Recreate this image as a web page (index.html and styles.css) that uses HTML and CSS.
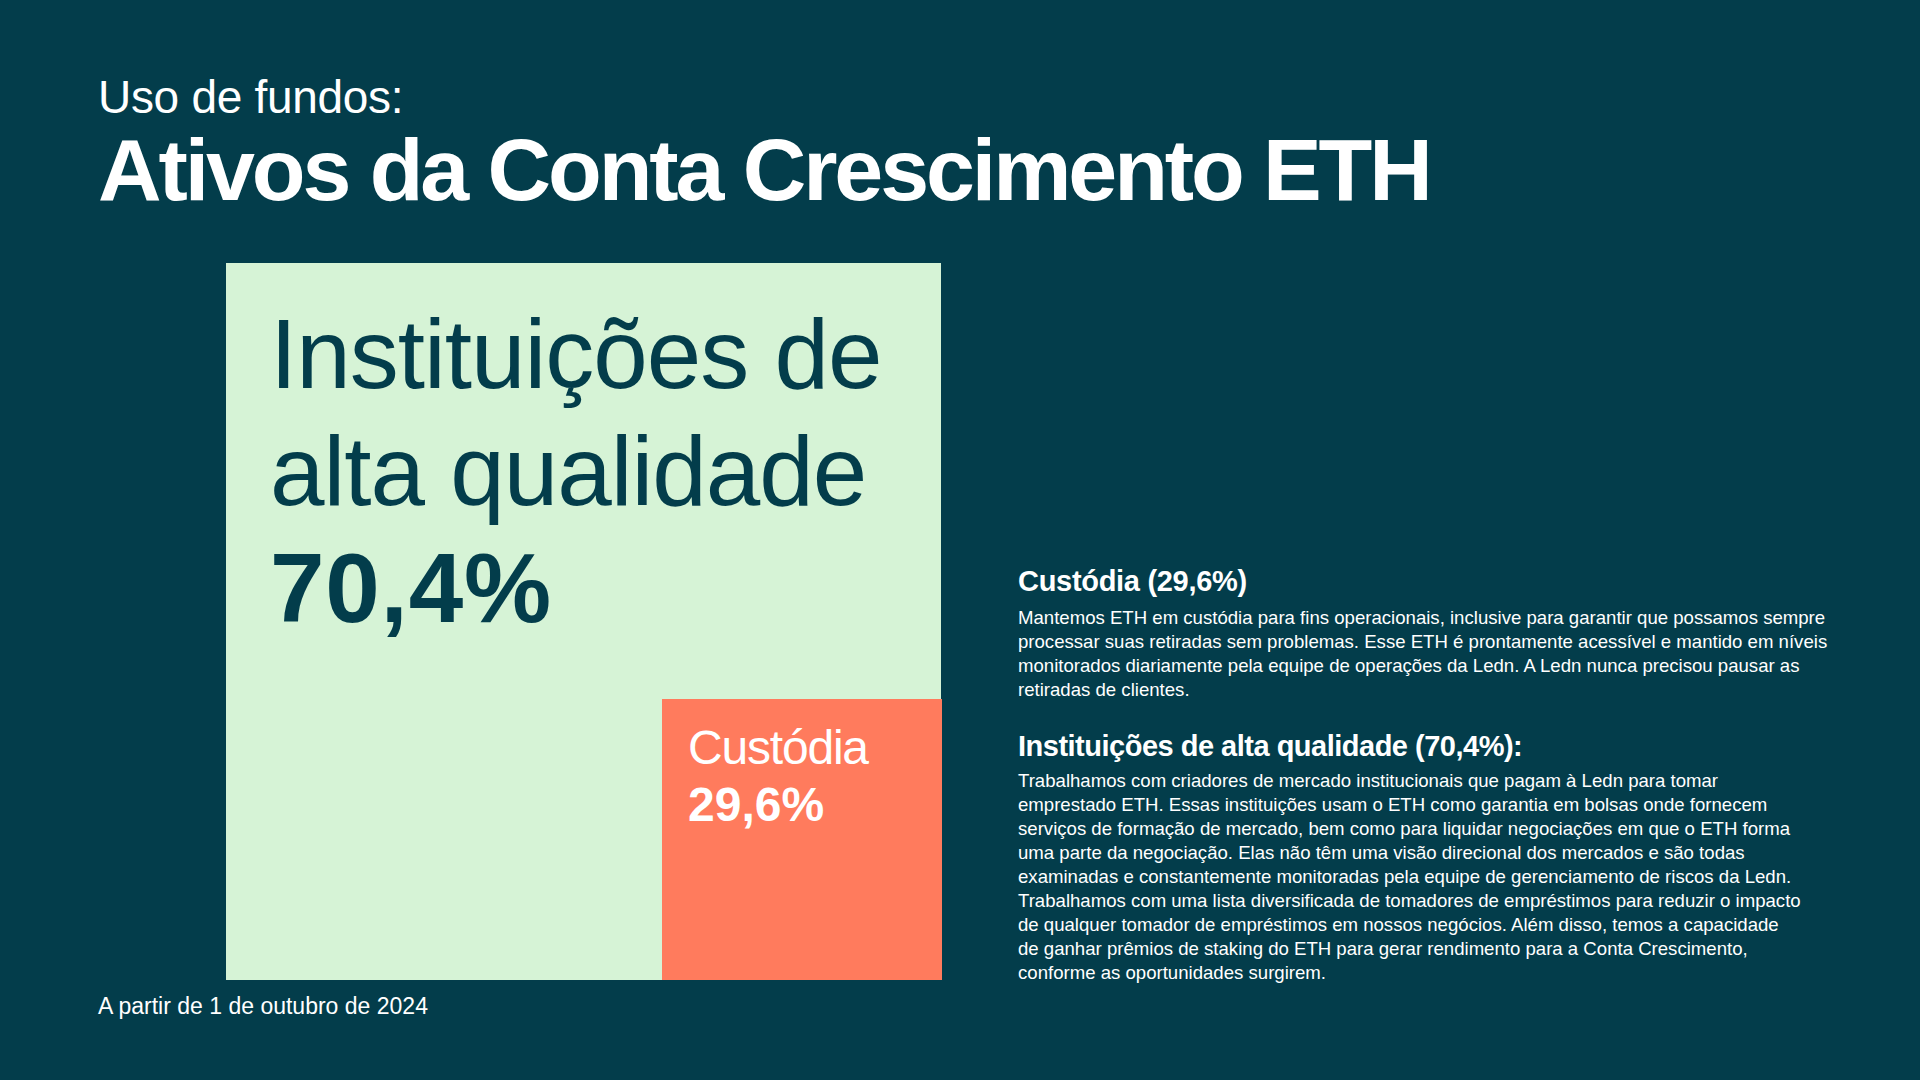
FILE: index.html
```html
<!DOCTYPE html>
<html lang="pt">
<head>
<meta charset="utf-8">
<title>Uso de fundos: Ativos da Conta Crescimento ETH</title>
<link rel="stylesheet" href="styles.css">
</head>
<body>
<div class="page">
  <header class="header">
    <p class="kicker">Uso de fundos:</p>
    <h1 class="title">Ativos da Conta Crescimento ETH</h1>
  </header>
  <main class="main">
    <div class="chart">
      <div class="chart-label">
        <p class="chart-name">Instituições de<br>alta qualidade</p>
        <p class="chart-value">70,4%</p>
      </div>
      <div class="custody">
        <p class="custody-name">Custódia</p>
        <p class="custody-value">29,6%</p>
      </div>
    </div>
    <section class="notes">
      <h2 class="note-title">Custódia (29,6%)</h2>
      <p class="note-text">Mantemos ETH em custódia para fins operacionais, inclusive para garantir que possamos sempre<br>processar suas retiradas sem problemas. Esse ETH é prontamente acessível e mantido em níveis<br>monitorados diariamente pela equipe de operações da Ledn. A Ledn nunca precisou pausar as<br>retiradas de clientes.</p>
      <h2 class="note-title note-title-second">Instituições de alta qualidade (70,4%):</h2>
      <p class="note-text">Trabalhamos com criadores de mercado institucionais que pagam à Ledn para tomar<br>emprestado ETH. Essas instituições usam o ETH como garantia em bolsas onde fornecem<br>serviços de formação de mercado, bem como para liquidar negociações em que o ETH forma<br>uma parte da negociação. Elas não têm uma visão direcional dos mercados e são todas<br>examinadas e constantemente monitoradas pela equipe de gerenciamento de riscos da Ledn.<br>Trabalhamos com uma lista diversificada de tomadores de empréstimos para reduzir o impacto<br>de qualquer tomador de empréstimos em nossos negócios. Além disso, temos a capacidade<br>de ganhar prêmios de staking do ETH para gerar rendimento para a Conta Crescimento,<br>conforme as oportunidades surgirem.</p>
    </section>
  </main>
  <footer class="footer">A partir de 1 de outubro de 2024</footer>
</div>
</body>
</html>
```

FILE: styles.css
```css
html, body {
  margin: 0;
  padding: 0;
}

body {
  width: 1920px;
  height: 1080px;
  overflow: hidden;
  background: #033d4b;
  color: #ffffff;
  font-family: "Liberation Sans", Arial, sans-serif;
}

p, h1, h2 {
  margin: 0;
}

.page {
  padding: 74px 0 0 98px;
}

.header {
  display: flex;
  flex-direction: column;
  gap: 6px;
}

.kicker {
  font-size: 46px;
  line-height: 46px;
  font-weight: 400;
  letter-spacing: -0.3px;
}

.title {
  font-size: 88px;
  line-height: 88px;
  font-weight: 700;
  letter-spacing: -3.1px;
}

.main {
  display: flex;
  align-items: flex-start;
  gap: 77px;
  margin-top: 49px;
  padding-left: 128px;
}

.chart {
  width: 715px;
  height: 717px;
  background: #d6f3d6;
  color: #033d4b;
  display: flex;
  flex-direction: column;
}

.chart-label {
  padding: 33px 0 0 44px;
  font-size: 98px;
  line-height: 117px;
}

.chart-name {
  letter-spacing: -1px;
}

.chart-value {
  font-weight: 700;
  letter-spacing: 0.8px;
}

.custody {
  margin-top: auto;
  align-self: flex-end;
  margin-right: -1px;
  width: 280px;
  height: 281px;
  box-sizing: border-box;
  padding: 20px 0 0 26px;
  background: #ff7b5d;
  color: #ffffff;
  font-size: 48px;
  line-height: 57px;
}

.custody-name {
  letter-spacing: -1.2px;
}

.custody-value {
  font-weight: 700;
}

.notes {
  margin-top: 301px;
  width: 880px;
}

.note-title {
  font-size: 29px;
  line-height: 35px;
  font-weight: 700;
  letter-spacing: -0.3px;
}

.note-title-second {
  margin-top: 27px;
  letter-spacing: -0.5px;
}

.note-text {
  margin-top: 7px;
  font-size: 18.6px;
  line-height: 24px;
  white-space: nowrap;
}

.note-title-second + .note-text {
  margin-top: 5px;
}

.footer {
  margin-top: 7px;
  font-size: 23px;
  line-height: 28px;
}
```
